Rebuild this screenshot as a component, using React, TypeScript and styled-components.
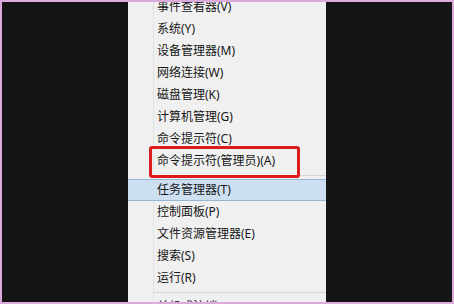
import React from "react";
import styled, { createGlobalStyle } from "styled-components";

const GlobalStyle = createGlobalStyle`
  html, body {
    margin: 0;
    padding: 0;
    background: #151515;
  }
  * { box-sizing: border-box; }
`;

const Frame = styled.div`
  width: 454px;
  height: 304px;
  border: 2px solid #dcaadc;
  background: #151515;
  display: flex;
  padding-left: 126px;
  overflow: hidden;
`;

const Panel = styled.div`
  width: 198px;
  height: 100%;
  background: linear-gradient(
    to right,
    #f0f0f0 25px,
    #e2e2e2 25px,
    #e2e2e2 26px,
    #f0f0f0 26px
  );
  display: flex;
  flex-direction: column;
  font-family: "Noto Sans", "Noto Sans CJK SC", sans-serif;
  font-size: 12px;
  color: #161616;
`;

const List = styled.div`
  margin-top: -6px;
  display: flex;
  flex-direction: column;
`;

const Item = styled.div<{ $active?: boolean }>`
  position: relative;
  flex: 0 0 22px;
  height: 22px;
  line-height: 20px;
  padding-left: 29px;
  white-space: nowrap;
  background: ${(p) => (p.$active ? "#cde0f1" : "transparent")};
  border-top: 1px solid ${(p) => (p.$active ? "#96b6d6" : "transparent")};
  border-bottom: 1px solid ${(p) => (p.$active ? "#96b6d6" : "transparent")};
`;

const Separator = styled.div`
  flex: 0 0 7px;
  height: 7px;
  margin-left: 25px;
  background: linear-gradient(
    to bottom,
    transparent 3px,
    #d6d6d6 3px,
    #d6d6d6 4px,
    transparent 4px
  );
`;

const Highlight = styled.span`
  position: absolute;
  top: -5px;
  left: 21px;
  width: 151px;
  height: 32px;
  border: 3px solid #dc1c1c;
  border-radius: 3px;
  pointer-events: none;
`;

type Entry = { label: string; active?: boolean; marked?: boolean } | "sep";

const entries: Entry[] = [
  { label: "事件查看器(V)" },
  { label: "系统(Y)" },
  { label: "设备管理器(M)" },
  { label: "网络连接(W)" },
  { label: "磁盘管理(K)" },
  { label: "计算机管理(G)" },
  { label: "命令提示符(C)" },
  { label: "命令提示符(管理员)(A)", marked: true },
  "sep",
  { label: "任务管理器(T)", active: true },
  { label: "控制面板(P)" },
  { label: "文件资源管理器(E)" },
  { label: "搜索(S)" },
  { label: "运行(R)" },
  "sep",
  { label: "关机或注销(U)" },
  { label: "桌面(D)" },
];

export default function App() {
  return (
    <>
      <GlobalStyle />
      <Frame>
        <Panel>
          <List>
            {entries.map((e, i) =>
              e === "sep" ? (
                <Separator key={i} />
              ) : (
                <Item key={i} $active={e.active}>
                  {e.label}
                  {e.marked && <Highlight />}
                </Item>
              )
            )}
          </List>
        </Panel>
      </Frame>
    </>
  );
}
